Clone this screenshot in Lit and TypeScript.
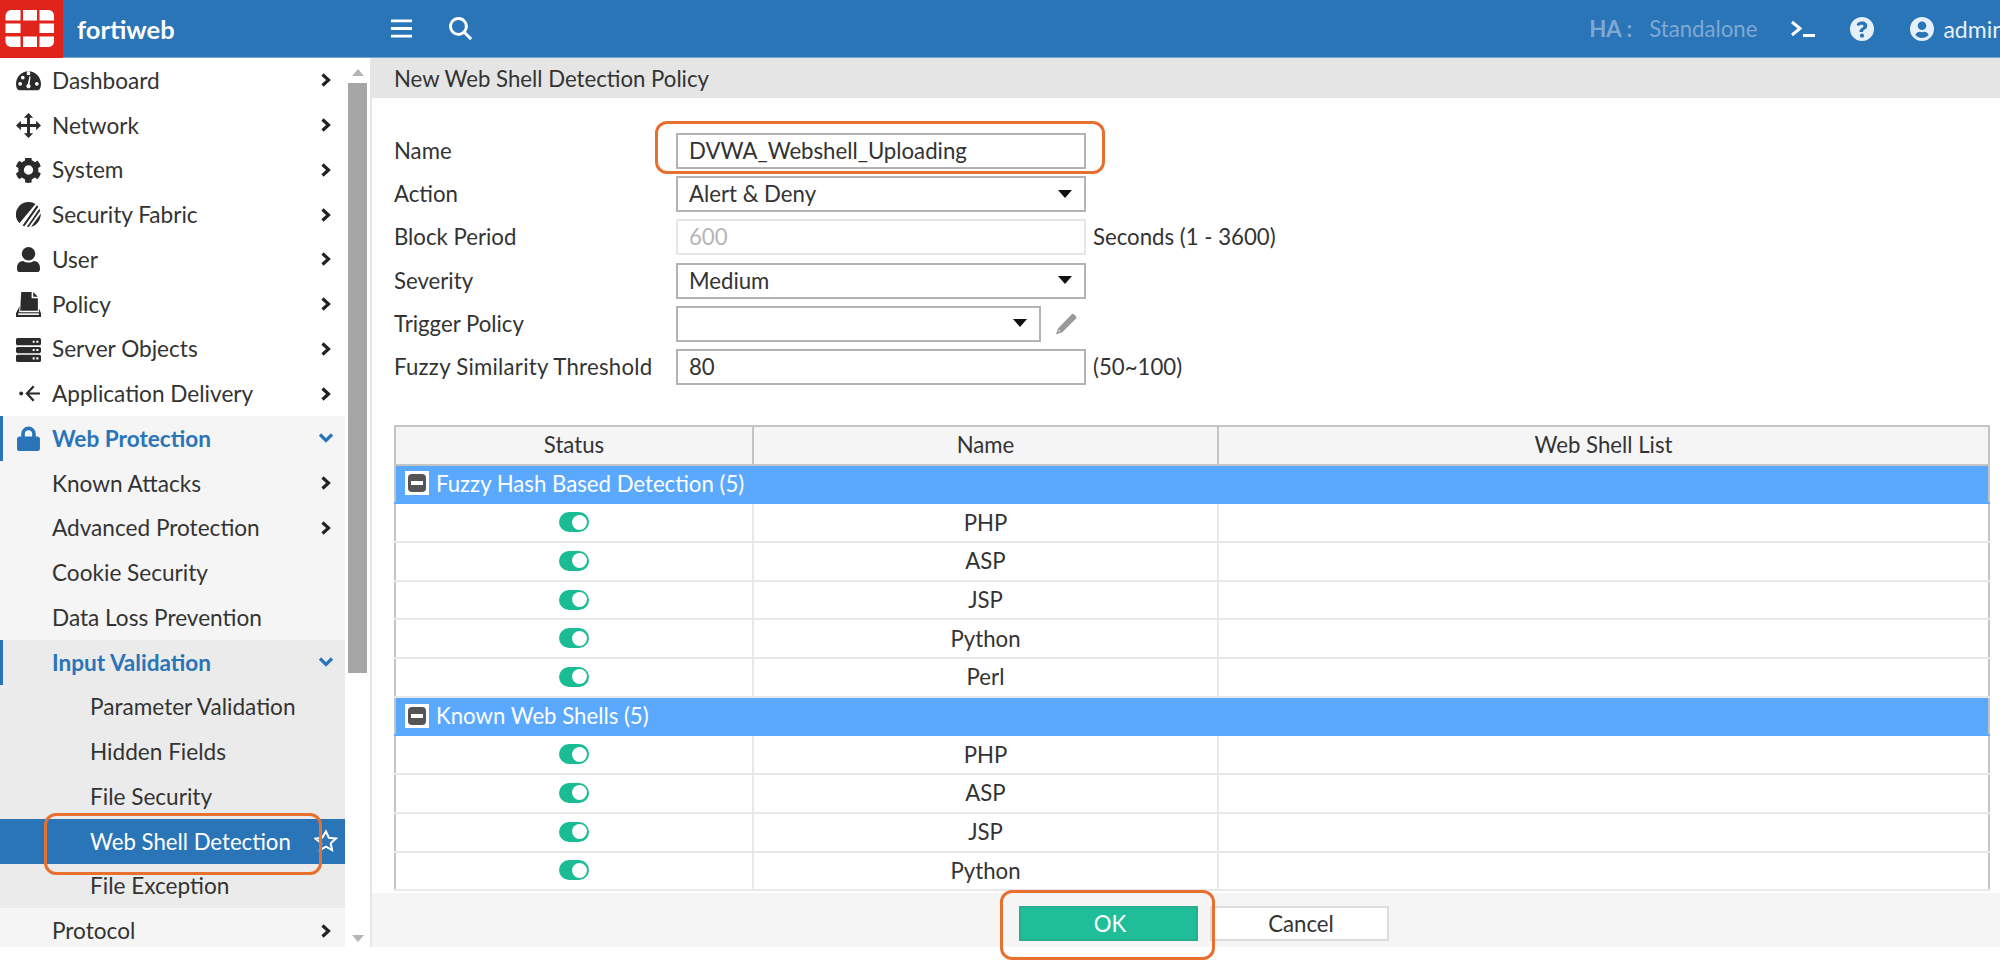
import { LitElement, html, css, svg } from 'lit';
import { customElement } from 'lit/decorators.js';

const icons: Record<string, unknown> = {
  dashboard: svg`<path fill-rule="evenodd" d="M12 3C5.400 3 0 8.400 0 15c0 2 .5 3.900 1.400 5.500.3.500.8.800 1.400.800h18.400c.6 0 1.100-.3 1.400-.8.900-1.600 1.400-3.500 1.400-5.500 0-6.600-5.400-12-12-12zM4 17a1.800 1.800 0 1 1 0-3.600A1.800 1.800 0 0 1 4 17zm2.500-6a1.800 1.800 0 1 1 0-3.600 1.800 1.800 0 0 1 0 3.600zM12 7a1.800 1.800 0 1 1 0-3.600A1.800 1.800 0 0 1 12 7zm2 10.500c0 1.100-.9 2-2 2s-2-.9-2-2c0-.8.500-1.500 1.200-1.800L13 8l1 .2-1 7.600c.6.300 1 1 1 1.700zm6-.5a1.800 1.800 0 1 1 0-3.600A1.800 1.800 0 0 1 20 17z"/>`,
  move: svg`<path d="M12 0l4.500 4.600h-3.100v5.900h5.900V7.400L24 12l-4.700 4.600v-3.100h-5.900v5.900h3.100L12 24l-4.500-4.600h3.100v-5.900H4.700v3.100L0 12l4.700-4.600v3.100h5.900V4.600H7.500z"/>`,
  cog: svg`<path fill-rule="evenodd" d="M21.300 13.300l2.200 1.300c.2.100.3.400.2.600-.6 1.800-1.500 3.400-2.800 4.800-.2.200-.4.200-.6.100l-2.200-1.300c-.9.800-2 1.400-3.100 1.800v2.500c0 .2-.2.500-.4.500-1.800.4-3.700.4-5.500 0-.3 0-.4-.3-.4-.5v-2.500c-1.100-.4-2.200-1-3.100-1.800l-2.200 1.300c-.2.100-.5.100-.6-.1C1.500 18.600.6 17 0 15.200c-.1-.2 0-.5.200-.6l2.200-1.300c-.2-1.200-.2-2.400 0-3.600L.2 8.400C0 8.300-.1 8 0 7.800c.6-1.800 1.500-3.400 2.800-4.800.2-.2.400-.2.600-.1l2.200 1.300c.9-.8 2-1.400 3.100-1.800V0c0-.2.200-.5.400-.5 1.800-.4 3.700-.4 5.500 0 .3 0 .4.300.4.500v2.200c1.100.4 2.200 1 3.100 1.800l2.200-1.300c.2-.1.500-.1.600.1 1.300 1.400 2.200 3 2.800 4.800.1.200 0 .5-.2.600l-2.200 1.300c.2 1.200.2 2.600 0 3.800zM12 16a4.500 4.500 0 1 0 0-9 4.500 4.500 0 0 0 0 9z"/>`,
  fabric: svg`<path d="M12 0a12 12 0 0 0-8.700 20.300L18.700 1.800A12 12 0 0 0 12 0z"/><path d="M20 3.200L6.300 22.500l1.800.8L21.500 4.600zM22.400 6.500L10.500 23.800l1.800.2L23.300 8.500zM23.800 11L14.500 23.700c5-1 9.500-6 9.300-12.700z"/>`,
  user: svg`<path d="M12 0a6.500 6.500 0 1 1 0 13 6.500 6.500 0 0 1 0-13zM7 13.500c1.400 1 3.100 1.500 5 1.500s3.600-.5 5-1.500c3.700 0 6 2.800 6 6.300v1.700c0 1.400-1.100 2.500-2.500 2.500h-17C2.100 24 1 22.900 1 21.500v-1.700c0-3.500 2.300-6.300 6-6.300z"/>`,
  policy: svg`<path d="M5 0h10v6h6v12H4z"/><path d="M16.500 0L21 4.500h-4.500z"/><path d="M3.500 13.500L0 20.500V24h24v-3.500l-2-5v4H3z"/><path fill="#fff" d="M2 20.500h20V22H2z"/>`,
  server: svg`<path fill-rule="evenodd" d="M1.500 1h21c.8 0 1.500.7 1.500 1.500v4c0 .8-.7 1.500-1.500 1.500h-21C.7 8 0 7.300 0 6.500v-4C0 1.700.7 1 1.500 1zm0 8.500h21c.8 0 1.500.7 1.500 1.500v3c0 .8-.7 1.500-1.500 1.500h-21C.7 15.500 0 14.800 0 14v-3c0-.8.700-1.500 1.500-1.500zm0 7.500h21c.8 0 1.500.7 1.500 1.500v4c0 .8-.7 1.500-1.500 1.500h-21c-.8 0-1.500-.7-1.500-1.500v-4C0 17.700.7 17 1.500 17zM16 3.500v2h2v-2zm3.500 0v2h2v-2zM16 11.500v2h2v-2zm3.500 0v2h2v-2zM16 19.500v2h2v-2zm3.500 0v2h2v-2z"/>`,
  delivery: svg`<path d="M11.500 12H23" stroke="currentColor" stroke-width="2" fill="none"/><path d="M17 5l-6.500 7 6.500 7" stroke="currentColor" stroke-width="2.200" fill="none"/><circle cx="5" cy="12" r="1.900"/>`,
  lock: svg`<path fill-rule="evenodd" d="M5 10V7.500a7 7 0 0 1 14 0V10h1.500c1.400 0 2.500 1.100 2.500 2.500v9c0 1.400-1.100 2.500-2.500 2.500h-17A2.500 2.500 0 0 1 1 21.500v-9C1 11.100 2.100 10 3.500 10zm3.500 0h7V7.500a3.500 3.500 0 0 0-7 0z"/>`,
};

const chevronRight = html`<svg class="chev" viewBox="0 0 12 14"><path d="M2.500 1.500L8.500 7l-6 5.500" fill="none" stroke="currentColor" stroke-width="3.200"/></svg>`;
const chevronDown = html`<svg class="chev blue" viewBox="0 0 16 12"><path d="M2 2.500l6 6 6-6" fill="none" stroke="currentColor" stroke-width="3.200"/></svg>`;
const caret = html`<svg class="caret" viewBox="0 0 14 8"><path d="M0 0h14L7 8z"/></svg>`;

interface NavItem {
  label: string;
  icon?: string;
  level: number;
  arrow?: 'right' | 'down';
  cls?: string;
}

const NAV: NavItem[] = [
  { label: 'Dashboard', icon: 'dashboard', level: 0, arrow: 'right' },
  { label: 'Network', icon: 'move', level: 0, arrow: 'right' },
  { label: 'System', icon: 'cog', level: 0, arrow: 'right' },
  { label: 'Security Fabric', icon: 'fabric', level: 0, arrow: 'right' },
  { label: 'User', icon: 'user', level: 0, arrow: 'right' },
  { label: 'Policy', icon: 'policy', level: 0, arrow: 'right' },
  { label: 'Server Objects', icon: 'server', level: 0, arrow: 'right' },
  { label: 'Application Delivery', icon: 'delivery', level: 0, arrow: 'right' },
  { label: 'Web Protection', icon: 'lock', level: 0, arrow: 'down', cls: 'g1 open' },
  { label: 'Known Attacks', level: 1, arrow: 'right', cls: 'g1' },
  { label: 'Advanced Protection', level: 1, arrow: 'right', cls: 'g1' },
  { label: 'Cookie Security', level: 1, cls: 'g1' },
  { label: 'Data Loss Prevention', level: 1, cls: 'g1' },
  { label: 'Input Validation', level: 1, arrow: 'down', cls: 'g2 open' },
  { label: 'Parameter Validation', level: 2, cls: 'g2' },
  { label: 'Hidden Fields', level: 2, cls: 'g2' },
  { label: 'File Security', level: 2, cls: 'g2' },
  { label: 'Web Shell Detection', level: 2, cls: 'active' },
  { label: 'File Exception', level: 2, cls: 'g2' },
  { label: 'Protocol', level: 1, arrow: 'right', cls: 'g1' },
];

// the last row of the second group sits below the fold, so it is left out
const GROUPS = [
  { title: 'Fuzzy Hash Based Detection (5)', rows: ['PHP', 'ASP', 'JSP', 'Python', 'Perl'] },
  { title: 'Known Web Shells (5)', rows: ['PHP', 'ASP', 'JSP', 'Python'] },
];

@customElement('app-root')
export class AppRoot extends LitElement {
  static styles = css`
    :host {
      display: block;
      position: relative;
      width: 2000px;
      height: 961px;
      overflow: hidden;
      background: #fff;
      font-family: Lato, 'Liberation Sans', sans-serif;
      font-size: 22.2px;
      color: #333;
    }
    svg { display: block; fill: currentColor; }

    .top {
      display: flex;
      align-items: center;
      height: 58px;
      box-sizing: border-box;
      background: #2a74b8;
      border-bottom: 1px solid #7ba6d2;
      color: #fff;
    }
    .logo { width: 63px; height: 58px; background: #e0241b; flex: none; }
    .brand { margin-left: 14px; width: 313px; font-size: 25.5px; font-weight: 700; }
    .tool { width: 23px; height: 23px; }
    .search { margin-left: 35px; width: 25px; height: 25px; }
    .right { margin-left: auto; margin-right: -5px; display: flex; align-items: center; }
    .ha { font-weight: 700; color: #7fa9d3; margin-right: 17px; }
    .standalone { color: #7fa9d3; margin-right: 33px; }
    .term { width: 25px; height: 20px; margin-right: 35px; }
    .help { width: 24px; height: 24px; margin-right: 36px; }
    .usericon { width: 24px; height: 24px; margin-right: 9px; }
    .admin { color: #e6f0fa; font-size: 23px; }
    .help, .usericon { color: #e6f0fa; }

    .shell { display: flex; height: 889px; }
    .side { display: flex; width: 372px; flex: none; box-sizing: border-box; border-right: 2px solid #e6e6e6; }
    .nav { width: 345px; flex: none; overflow: hidden; font-size: 22.6px; }
    .row {
      display: flex;
      align-items: center;
      height: 44.75px;
      box-sizing: border-box;
      position: relative;
      padding-left: 52px;
      padding-right: 13px;
    }
    .row.l2 { padding-left: 90px; }
    .row.g1 { background: #f5f5f5; }
    .row.g2 { background: #ebebeb; }
    .row.open { color: #2a74b8; font-weight: 700; }
    .row.open::before {
      content: '';
      position: absolute;
      left: 0;
      top: 0;
      bottom: 0;
      width: 3px;
      background: #2a74b8;
    }
    .row.active { background: #2a74b8; color: #fff; font-size: 22.2px; }
    .nicon { position: absolute; left: 16px; top: 10px; width: 25px; height: 25px; color: #2b2b2b; }
    .open .nicon { color: #2a74b8; }
    .label { flex: 1; white-space: nowrap; }
    .chev { width: 12px; height: 14px; color: #222; flex: none; }
    .chev.blue { width: 16px; height: 12px; color: #2a74b8; margin-right: -2px; }
    .star { width: 24px; height: 24px; margin-right: -6px; flex: none; }

    .bar { width: 25px; flex: none; display: flex; flex-direction: column; align-items: center; }
    .arrow { width: 12px; height: 7px; color: #b5b5b5; flex: none; }
    .arrow.up { margin: 11px 0 7px; }
    .arrow.down { margin-top: auto; margin-bottom: 5px; }
    .thumb { width: 19px; height: 590px; background: #a6a6a6; }

    .main { flex: 1; min-width: 0; display: flex; flex-direction: column; }
    .title {
      display: flex;
      align-items: center;
      height: 40px;
      flex: none;
      box-sizing: border-box;
      padding: 1px 0 0 22px;
      background: #e5e5e5;
    }
    .body { flex: 1; min-height: 0; overflow: hidden; padding: 35px 10px 0 22px; }
    .form {
      display: grid;
      grid-template-columns: 282px 410px 1fr;
      grid-auto-rows: 36px;
      row-gap: 7.2px;
      align-items: center;
    }
    .form > span { position: relative; top: -0.5px; }
    .form > .fuzzy { letter-spacing: 0.25px; white-space: nowrap; }
    .field {
      display: flex;
      align-items: center;
      justify-content: space-between;
      height: 36px;
      box-sizing: border-box;
      padding: 0 12px 1px 11px;
      border: 2px solid #b3b3b3;
      background: #fff;
      color: #333;
    }
    .field.off { border-color: #e6e6e6; color: #b5b5b5; }
    .field.short { width: 365px; }
    .caret { width: 14px; height: 8px; color: #111; }
    .hint { padding-left: 7px; white-space: nowrap; }
    .trigger { display: flex; align-items: center; gap: 14px; }
    .pencil { width: 22px; height: 22px; color: #999; }

    table {
      width: 1596px;
      margin-top: 40px;
      border-collapse: collapse;
      table-layout: fixed;
    }
    th, td { height: 38.7px; padding: 0 0 1px; box-sizing: border-box; text-align: center; }
    th { background: #f5f5f5; font-weight: 400; border: 2px solid #c4c4c4; }
    td { border: 2px solid #e8e8e8; }
    td:first-child { border-left-color: #c4c4c4; }
    td:last-child { border-right-color: #c4c4c4; }
    td.grp { background: #5aa9ff; color: #fff; text-align: left; border-color: #5aa9ff #c4c4c4 #5aa9ff #c4c4c4; }
    .grpin { display: flex; align-items: center; gap: 7px; padding-left: 9px; }
    .minus { width: 24px; height: 24px; background: #fff; display: flex; align-items: center; justify-content: center; }
    .minus i { display: block; width: 18px; height: 18px; border-radius: 4px; background: #555; position: relative; }
    .minus i::after { content: ''; position: absolute; left: 3px; right: 3px; top: 7px; height: 4px; background: #fff; }
    .toggle {
      display: flex;
      justify-content: flex-end;
      align-items: center;
      width: 30px;
      height: 20px;
      margin: 0 auto;
      padding: 0 2px;
      box-sizing: border-box;
      border-radius: 10px;
      background: #1abc94;
    }
    .toggle i { display: block; width: 15px; height: 15px; border-radius: 50%; background: #fff; }

    .foot {
      display: flex;
      justify-content: center;
      align-items: center;
      gap: 12px;
      height: 54px;
      flex: none;
      padding: 7px 0 0 36px;
      box-sizing: border-box;
      background: #f5f5f5;
    }
    .btn {
      display: flex;
      align-items: center;
      justify-content: center;
      width: 179px;
      height: 35px;
      box-sizing: border-box;
      padding-left: 3px;
      border: 2px solid #ddd;
      background: #fff;
    }
    .btn.ok { background: #1fbe99; border-color: #27ae8d; color: #fff; }

    .mark { position: absolute; box-sizing: border-box; border: 3px solid #e8702f; border-radius: 12px; pointer-events: none; }
    .mark.m1 { left: 655px; top: 121px; width: 450px; height: 53px; }
    .mark.m2 { left: 44px; top: 813px; width: 278px; height: 62px; }
    .mark.m3 { left: 1000px; top: 890px; width: 215px; height: 70px; }
  `;

  renderNav(n: NavItem) {
    return html`<div class="row l${n.level} ${n.cls ?? ''}">
      ${n.icon ? html`<svg class="nicon" viewBox="0 0 24 24">${icons[n.icon]}</svg>` : ''}
      <span class="label">${n.label}</span>
      ${n.arrow === 'right' ? chevronRight : n.arrow === 'down' ? chevronDown : ''}
      ${n.cls === 'active'
        ? html`<svg class="star" viewBox="0 0 24 24"><path d="M12 2.500l2.900 6.300 6.900.8-5.100 4.700 1.400 6.800-6.100-3.400-6.100 3.400 1.400-6.800L1.300 9.600l6.900-.8z" fill="none" stroke="currentColor" stroke-width="2"/></svg>`
        : ''}
    </div>`;
  }

  render() {
    return html`
      <div class="top">
        <div class="logo">
          <svg width="63" height="58" viewBox="0 0 63 58" fill="#fff">
            <path d="M12 10h8.500v10.500H5.500V16.500c0-4 2.500-6.500 6.500-6.500zM23 10h14v10.500H23zM39.500 10H48c4 0 6 2.500 6 6.500v4H39.500zM5.500 23.500h15V33h-15zM39.500 23.500H54V33H39.500zM5.500 36.500h15V47H12c-4 0-6.500-2.500-6.500-6zM23 36.500h14V47H23zM39.500 36.500H54V41c0 3.500-2 6-6 6h-8.500z" />
          </svg>
        </div>
        <div class="brand">fortiweb</div>
        <svg class="tool" viewBox="0 0 24 24"><path d="M1 2.500h22v3H1zM1 10.500h22v3H1zM1 18.500h22v3H1z"/></svg>
        <svg class="tool search" viewBox="0 0 24 24"><path fill-rule="evenodd" d="M10 1a9 9 0 0 1 7.300 14.300l5.900 5.900-2 2-5.900-5.900A9 9 0 1 1 10 1zm0 2.800a6.200 6.200 0 1 0 0 12.400 6.200 6.200 0 0 0 0-12.400z"/></svg>
        <div class="right">
          <span class="ha">HA :</span>
          <span class="standalone">Standalone</span>
          <svg class="term" viewBox="0 0 25 20"><path d="M2 3l8 6.500L2 16" fill="none" stroke="currentColor" stroke-width="3"/><path d="M13 15h12v3H13z"/></svg>
          <svg class="help" viewBox="0 0 24 24"><path fill-rule="evenodd" d="M12 0a12 12 0 1 1 0 24 12 12 0 0 1 0-24zm-.2 4.500c-2.600 0-4.200 1.200-5.300 3l2.300 1.700c.7-.9 1.300-1.500 2.700-1.500 1 0 2 .5 2 1.400 0 .8-.6 1.200-1.700 1.800-1.200.7-2.300 1.600-2.300 3.300v.8h3.600v-.5c0-.9.500-1.200 1.600-1.900 1.300-.7 2.600-1.800 2.600-3.700 0-2.800-2.500-4.400-4.500-4.400zM12 16.600a2.100 2.100 0 1 0 0 4.200 2.100 2.100 0 0 0 0-4.200z"/></svg>
          <svg class="usericon" viewBox="0 0 24 24"><path fill-rule="evenodd" d="M12 0a12 12 0 1 1 0 24 12 12 0 0 1 0-24zm0 4.500a4.300 4.300 0 1 0 0 8.600 4.300 4.300 0 0 0 0-8.600zm0 16.500c2.600 0 5-1.100 6.600-3-.5-1.900-2.200-3.200-4.100-3.200-.8.300-1.600.5-2.500.5s-1.700-.2-2.500-.5c-1.900 0-3.600 1.300-4.100 3.200 1.600 1.900 4 3 6.600 3z"/></svg>
          <span class="admin">admin</span>
        </div>
      </div>

      <div class="shell">
        <div class="side">
          <div class="nav">${NAV.map((n) => this.renderNav(n))}</div>
          <div class="bar">
            <svg class="arrow up" viewBox="0 0 12 7"><path d="M6 0l6 7H0z"/></svg>
            <div class="thumb"></div>
            <svg class="arrow down" viewBox="0 0 12 7"><path d="M0 0h12L6 7z"/></svg>
          </div>
        </div>

        <div class="main">
          <div class="title">New Web Shell Detection Policy</div>
          <div class="body">
            <div class="form">
              <span>Name</span>
              <div class="field">DVWA_Webshell_Uploading</div>
              <span></span>
              <span>Action</span>
              <div class="field">Alert &amp; Deny${caret}</div>
              <span></span>
              <span>Block Period</span>
              <div class="field off">600</div>
              <span class="hint">Seconds (1 - 3600)</span>
              <span>Severity</span>
              <div class="field">Medium${caret}</div>
              <span></span>
              <span>Trigger Policy</span>
              <div class="trigger">
                <div class="field short"><span></span>${caret}</div>
                <svg class="pencil" viewBox="0 0 24 24"><path fill-rule="evenodd" d="M18 1.500c.8-.8 2-.8 2.800 0l2 2c.8.800.8 2 0 2.800L8 21l-7 2.500L3.500 16.500zM4.800 18.300l-1 2 .1.100 2-1z"/></svg>
              </div>
              <span></span>
              <span class="fuzzy">Fuzzy Similarity Threshold</span>
              <div class="field">80</div>
              <span class="hint">(50~100)</span>
            </div>

            <table>
              <colgroup><col style="width:358px" /><col style="width:465px" /><col /></colgroup>
              <thead><tr><th>Status</th><th>Name</th><th>Web Shell List</th></tr></thead>
              <tbody>
                ${GROUPS.map(
                  (g) => html`
                    <tr><td class="grp" colspan="3"><div class="grpin"><span class="minus"><i></i></span>${g.title}</div></td></tr>
                    ${g.rows.map(
                      (r) => html`<tr><td><div class="toggle"><i></i></div></td><td>${r}</td><td></td></tr>`
                    )}
                  `
                )}
              </tbody>
            </table>
          </div>
          <div class="foot">
            <div class="btn ok">OK</div>
            <div class="btn">Cancel</div>
          </div>
        </div>
      </div>

      <div class="mark m1"></div>
      <div class="mark m2"></div>
      <div class="mark m3"></div>
    `;
  }
}
